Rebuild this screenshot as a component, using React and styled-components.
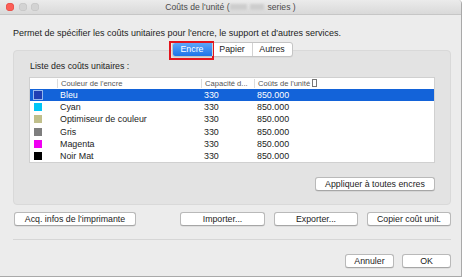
import React from 'react';
import styled, { createGlobalStyle } from 'styled-components';

const GlobalStyle = createGlobalStyle`
  html, body { margin: 0; padding: 0; background: #ffffff; }
  body { font-family: "Liberation Sans", Arial, sans-serif; }
`;

const Window = styled.div`
  width: 461px;
  height: 276px;
  background: #ececec;
  border-right: 1px solid #a9a9a9;
  border-bottom: 1px solid #a9a9a9;
  border-top-right-radius: 4px;
  display: flex;
  flex-direction: column;
  font-size: 8.8px;
  color: #1c1c1c;
  overflow: hidden;
`;

const TitleBar = styled.div`
  height: 14px;
  display: grid;
  grid-template-columns: 1fr auto 1fr;
  align-items: center;
  background: linear-gradient(#ebebeb, #d9d9d9);
  border-bottom: 1px solid #c6c6c6;
`;

const Lights = styled.div`
  display: flex;
  gap: 4.5px;
  padding-left: 6px;
`;

const Light = styled.span`
  width: 8px;
  height: 8px;
  border-radius: 50%;
  background: ${p => (p.$close ? '#fc5f57' : '#d3d3d3')};
  box-shadow: inset 0 0 0 0.5px ${p => (p.$close ? '#e1453e' : '#c2c2c2')};
`;

const Title = styled.div`
  display: flex;
  align-items: center;
  font-size: 8.6px;
  color: #4a4a4a;
  white-space: pre;
`;

const Blur = styled.span`
  display: inline-block;
  width: ${p => p.$w}px;
  height: 6px;
  margin-right: ${p => p.$gap || 0}px;
  background: #cdcdcd;
  filter: blur(1.2px);
`;

const Content = styled.div`
  flex: 1;
  display: flex;
  flex-direction: column;
  padding: 13px 10px 0 13px;
`;

const Description = styled.div`
  line-height: 11px;
  font-size: 9px;
`;

const TabRow = styled.div`
  display: flex;
  justify-content: center;
  margin: 3px 0 -7px;
  position: relative;
  z-index: 1;
`;

const Segmented = styled.div`
  display: flex;
  background: #ffffff;
  border: 1px solid #c4c4c4;
  border-radius: 3px;
  box-shadow: 0 0.5px 0 rgba(0, 0, 0, 0.08);
`;

const Segment = styled.div`
  position: relative;
  width: 39px;
  height: 13px;
  line-height: 13px;
  text-align: center;
  color: ${p => (p.$active ? '#ffffff' : '#1c1c1c')};
  background: ${p => (p.$active ? 'linear-gradient(#5ea6f8, #1d74ea)' : 'transparent')};
  border-left: ${p => (p.$first ? 'none' : '1px solid #d2d2d2')};
  border-radius: ${p => (p.$first ? '2px 0 0 2px' : '0')};

  /* red annotation frame drawn over the selected tab */
  &::after {
    content: '';
    display: ${p => (p.$marked ? 'block' : 'none')};
    position: absolute;
    left: -4px;
    right: -2px;
    top: -2px;
    bottom: -4px;
    border: 2px solid #e3151d;
  }
`;

const GroupBox = styled.div`
  background: #e3e3e3;
  border: 1px solid #d9d9d9;
  border-radius: 4px;
  padding: 10px 15px 13px 15px;
  display: flex;
  flex-direction: column;
`;

const Label = styled.div`
  line-height: 11px;
  padding-left: 1px;
  margin-bottom: 5px;
`;

const Table = styled.div`
  background: #ffffff;
  border: 1px solid #d0d0d0;
  display: flex;
  flex-direction: column;
  height: 84px;
`;

const Row = styled.div`
  display: grid;
  grid-template-columns: 27px 144px 53px 1fr;
  align-items: center;
  height: ${p => (p.$header ? '11px' : '12.2px')};
  background: ${p => (p.$selected ? '#1363d9' : 'transparent')};
  color: ${p => (p.$selected ? '#ffffff' : 'inherit')};
  font-size: ${p => (p.$header ? '7.6px' : '8.9px')};
`;

const HeadCell = styled.div`
  color: #555555;
  padding-left: 3px;
  border-left: ${p => (p.$first ? 'none' : '1px solid #dcdcdc')};
  line-height: 9px;
  white-space: nowrap;
  overflow: hidden;
`;

const Cell = styled.div`
  padding-left: 3px;
  white-space: nowrap;
`;

const SwatchCell = styled.div`
  padding-left: 4px;
  display: flex;
  align-items: center;
`;

const Swatch = styled.span`
  width: 8px;
  height: 8px;
  background: ${p => p.$color};
  box-shadow: ${p => (p.$selected ? '0 0 0 1px rgba(255,255,255,0.55)' : 'none')};
`;

const Missing = styled.span`
  display: inline-block;
  width: 3px;
  height: 6px;
  border: 0.5px solid #777;
  margin-left: 2px;
  vertical-align: -1px;
`;

const RightRow = styled.div`
  display: flex;
  justify-content: flex-end;
  margin-top: ${p => p.$top || 0}px;
  gap: ${p => p.$gap || 0}px;
`;

const ButtonRow = styled.div`
  display: flex;
  align-items: center;
  gap: 9px;
  margin-top: 7px;
  padding-left: 1px;
`;

const Spacer = styled.div`
  flex: 1;
`;

const Button = styled.div`
  width: ${p => p.$w}px;
  height: 12px;
  line-height: 12px;
  text-align: center;
  background: #ffffff;
  border: 0.5px solid #b9b9b9;
  border-bottom-color: #a6a6a6;
  border-radius: 3px;
  box-shadow: 0 0.5px 0.5px rgba(0, 0, 0, 0.12);
  white-space: nowrap;
`;

const Separator = styled.div`
  height: 1px;
  background: #d6d6d6;
  margin: 13px 0 14px;
`;

const inks = [
  { name: 'Bleu', color: '#1f3fb4', selected: true },
  { name: 'Cyan', color: '#00c5f6' },
  { name: 'Optimiseur de couleur', color: '#c0bf8b' },
  { name: 'Gris', color: '#7e7e7e' },
  { name: 'Magenta', color: '#f000f2' },
  { name: 'Noir Mat', color: '#000000' },
];

export default function App() {
  return (
    <>
      <GlobalStyle />
      <Window>
        <TitleBar>
          <Lights>
            <Light $close />
            <Light />
            <Light />
          </Lights>
          <Title>
            {"Coûts de l'unité ("}
            <Blur $w={17} $gap={3} />
            <Blur $w={14} $gap={4} />
            {'series )'}
          </Title>
          <div />
        </TitleBar>
        <Content>
          <Description>
            Permet de spécifier les coûts unitaires pour l'encre, le support et d'autres services.
          </Description>
          <TabRow>
            <Segmented>
              <Segment $first $active $marked>Encre</Segment>
              <Segment>Papier</Segment>
              <Segment>Autres</Segment>
            </Segmented>
          </TabRow>
          <GroupBox>
            <Label>Liste des coûts unitaires :</Label>
            <Table>
              <Row $header>
                <HeadCell $first />
                <HeadCell>Couleur de l'encre</HeadCell>
                <HeadCell>Capacité d...</HeadCell>
                <HeadCell>
                  Coûts de l'unité<Missing />
                </HeadCell>
              </Row>
              {inks.map(ink => (
                <Row key={ink.name} $selected={ink.selected}>
                  <SwatchCell>
                    <Swatch $color={ink.color} $selected={ink.selected} />
                  </SwatchCell>
                  <Cell>{ink.name}</Cell>
                  <Cell>330</Cell>
                  <Cell>850.000</Cell>
                </Row>
              ))}
            </Table>
            <RightRow $top={14}>
              <Button $w={118}>Appliquer à toutes encres</Button>
            </RightRow>
          </GroupBox>
          <ButtonRow>
            <Button $w={120}>Acq. infos de l'imprimante</Button>
            <Spacer />
            <Button $w={83}>Importer...</Button>
            <Button $w={82}>Exporter...</Button>
            <Button $w={82}>Copier coût unit.</Button>
          </ButtonRow>
          <Separator />
          <RightRow $gap={8}>
            <Button $w={47}>Annuler</Button>
            <Button $w={47}>OK</Button>
          </RightRow>
        </Content>
      </Window>
    </>
  );
}
